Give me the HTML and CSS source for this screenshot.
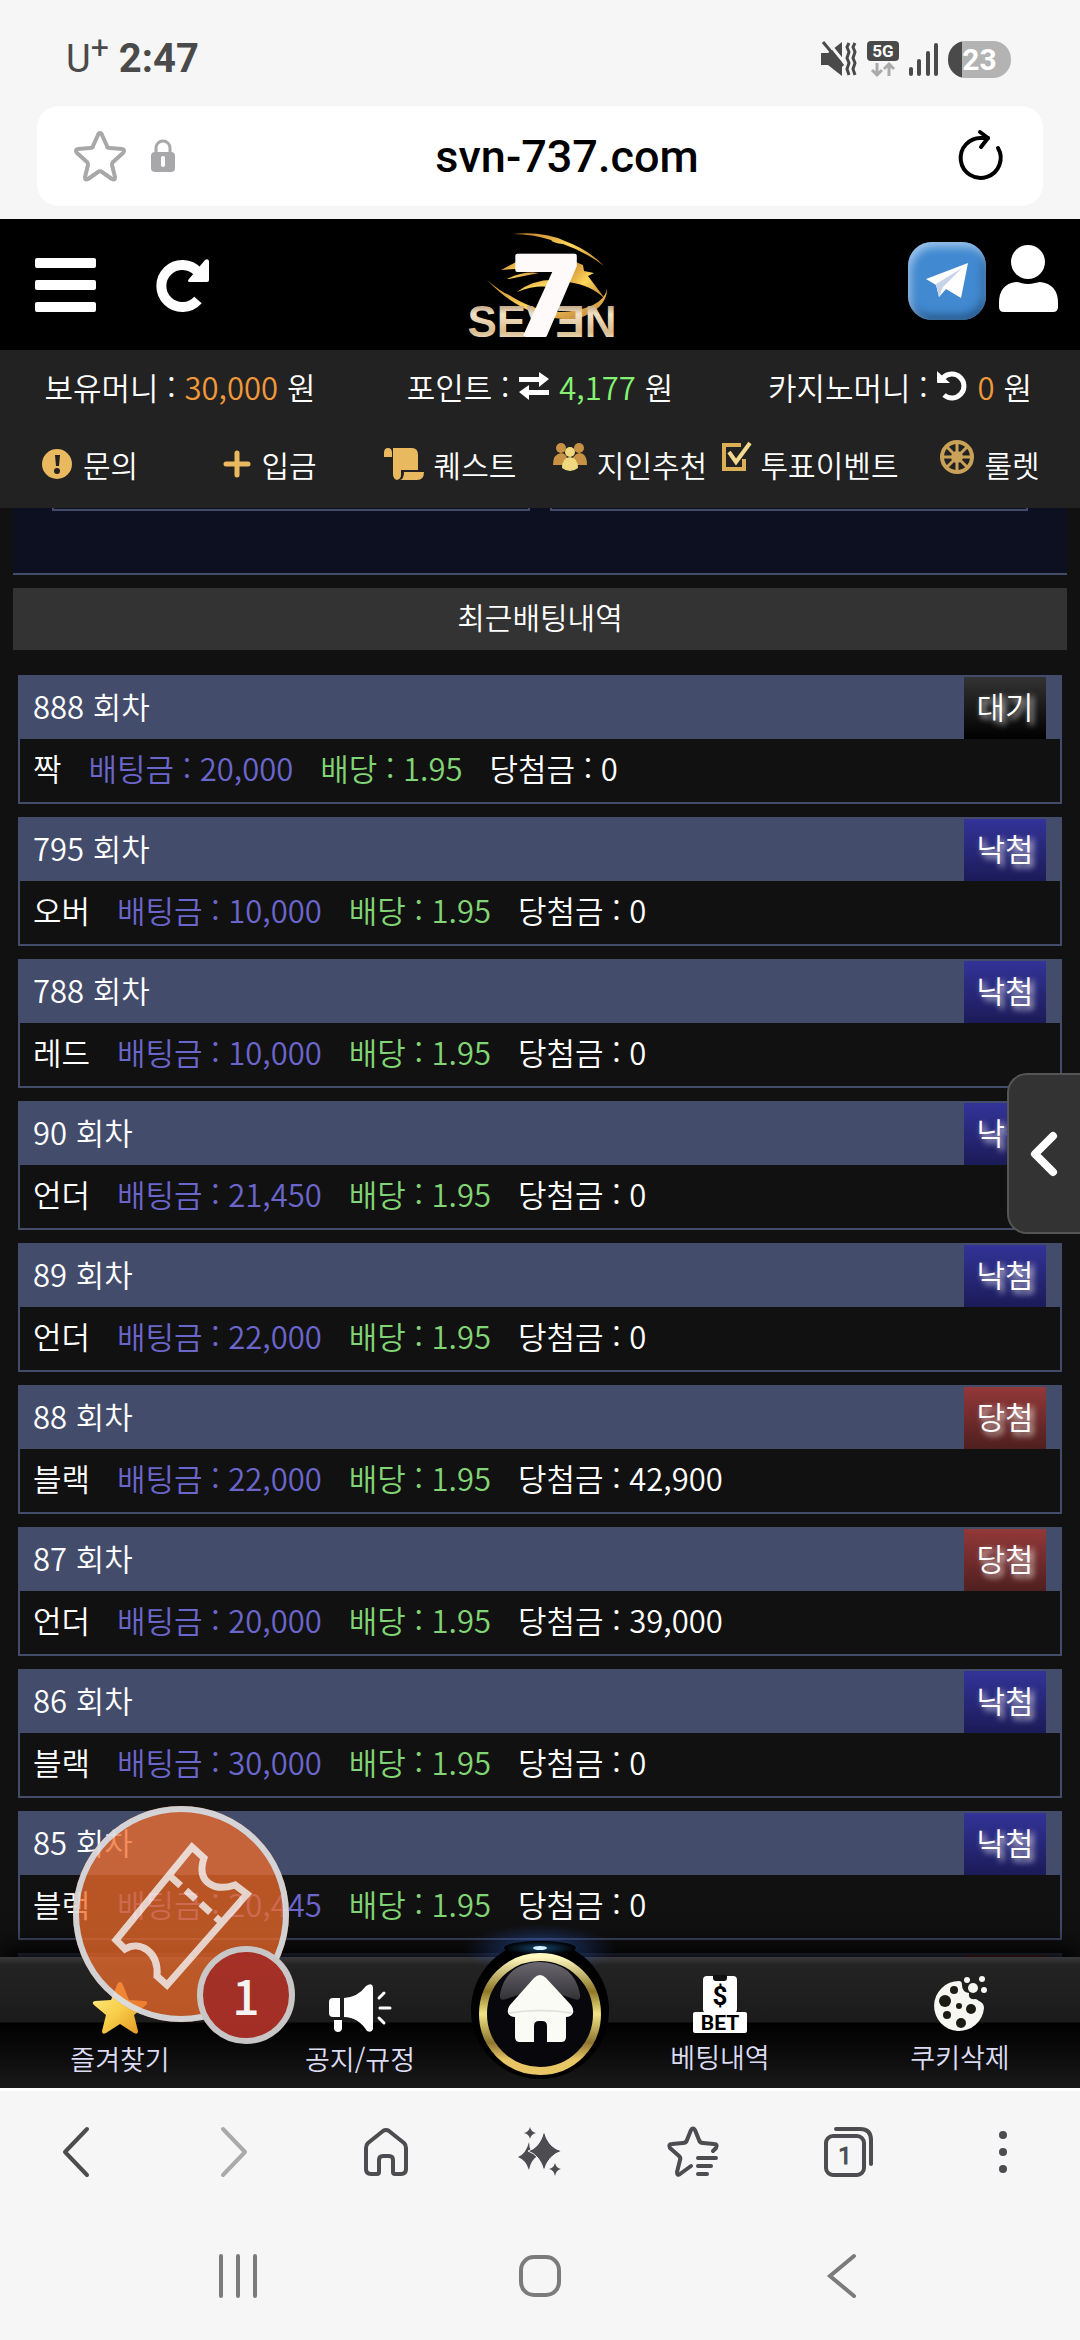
FILE: index.html
```html
<!DOCTYPE html>
<html lang="ko">
<head>
    <meta charset="utf-8">
    <meta name="viewport" content="width=device-width, initial-scale=1">
    <title>SEVEN</title>
    <link rel="stylesheet" href="styles.css">
</head>
<body>
    <div class="status-bar">
        <div class="status-left">
            <span class="carrier">U<sup>+</sup></span>
            <span class="clock">2:47</span>
        </div>
        <div class="status-right">
            <svg width="38" height="36" viewBox="0 0 38 36" fill="#4a4a4a">
                <path d="M1 12h7L22 1v34L8 24H1z"/>
                <path d="M7 0l20 25" stroke="#f6f6f6" stroke-width="3"/>
                <path d="M3 1l20 24" stroke="#4a4a4a" stroke-width="3"/>
                <path d="M29 2l-2 4 2 5-2 6 2 5-2 6 2 6M35 2l-2 4 2 5-2 6 2 5-2 6 2 6" fill="none" stroke="#4a4a4a" stroke-width="3"/>
            </svg>
            <svg width="32" height="36" viewBox="0 0 32 36">
                <rect x="0" y="0" width="32" height="20" rx="4" fill="#4a4a4a"/>
                <text class="svg-5g" x="16" y="16" text-anchor="middle">5G</text>
                <path d="M10 22v12M5 29l5 5 5-5M22 35V23M17 28l5-5 5 5" fill="none" stroke="#aaa" stroke-width="3"/>
            </svg>
            <svg width="31" height="36" viewBox="0 0 31 36" stroke="#4a4a4a" stroke-width="4" stroke-linecap="round">
                <path d="M3 28v5M11 20v13M20 12v21M28 4v29"/>
            </svg>
            <span class="battery">23</span>
        </div>
    </div>

    <form class="address-bar">
        <button type="button" class="icon-btn" aria-label="북마크">
            <svg width="50" height="50" viewBox="0 0 50 50" fill="none" stroke="#a8a8aa" stroke-width="4" stroke-linejoin="round">
                <path d="M25 2c1 0 2 1 2 2l5 11c0 2 1 2 3 2l12 1c2 0 3 2 1 4l-10 9c-1 1-1 2-1 3l3 12c0 3-1 3-3 2l-10-7c-1-1-3-1-4 0l-10 7c-2 1-3 1-3-2l3-12c0-1 0-2-1-3L2 22c-2-2-1-4 1-4l12-1c2 0 3 0 3-2l5-11c0-1 1-2 2-2z"/>
            </svg>
        </button>
        <svg class="lock" width="24" height="34" viewBox="0 0 24 34">
            <path d="M5 15V9a7 7 0 0114 0v6" fill="none" stroke="#a8a8aa" stroke-width="3"/>
            <rect x="0" y="13" width="24" height="20" rx="4" fill="#a8a8aa"/>
            <path d="M12 19v7" stroke="#fff" stroke-width="4" stroke-linecap="round"/>
        </svg>
        <input class="address" type="text" value="svn-737.com" aria-label="주소">
        <button type="button" class="icon-btn" aria-label="새로고침">
            <svg width="46" height="52" viewBox="0 0 46 52" fill="none" stroke="#000" stroke-width="4" stroke-linecap="round" stroke-linejoin="round">
                <path d="M39 18A20 20 0 1 1 23 8h6"/>
                <path d="M21 2l8 6-7 9"/>
            </svg>
        </button>
    </form>

    <div class="page">
        <header class="site-header">
            <div class="header-side">
                <button class="icon-btn" aria-label="메뉴">
                    <svg width="61" height="54" viewBox="0 0 61 54" fill="#fff">
                        <rect width="61" height="10" rx="2"/>
                        <rect y="22" width="61" height="10" rx="2"/>
                        <rect y="44" width="61" height="10" rx="2"/>
                    </svg>
                </button>
                <button class="icon-btn" aria-label="새로고침">
                    <svg width="54" height="54" viewBox="0 0 54 54">
                        <path d="M41 42A21 21 0 1 1 41 14" fill="none" stroke="#fff" stroke-width="10"/>
                        <path d="M52 3v19q0 2-2 2H32q-2-1 0-3L48 2q3-2 4 1z" fill="#fff"/>
                    </svg>
                </button>
            </div>
            <a href="#" class="logo" aria-label="SEVEN">
                <svg width="148" height="110" viewBox="0 0 148 110">
                    <defs>
                        <linearGradient id="gold" x1="0" x2="1" y1="0" y2="1">
                            <stop offset="0" stop-color="#c07a2c"/>
                            <stop offset=".5" stop-color="#ffd65a"/>
                            <stop offset="1" stop-color="#b87a35"/>
                        </linearGradient>
                        <linearGradient id="cream" x1="0" x2="0" y1="0" y2="1">
                            <stop offset="0" stop-color="#8f6a42"/>
                            <stop offset=".35" stop-color="#f3e2c6"/>
                            <stop offset=".7" stop-color="#d9bb8e"/>
                            <stop offset="1" stop-color="#fff6e4"/>
                        </linearGradient>
                    </defs>
                    <g fill="url(#gold)">
                        <path d="M40 4q30-3 52 7 24 9 39 25-18-14-41-22-10-1-12-4-18-6-38-6z"/>
                        <path d="M28 40l15-8v-2l20 2v9l-22-2zM34 49q16-8 32-6l-30 6z"/>
                        <path d="M44 62q18-14 42-12l-10 7q-14-2-32 5z"/>
                        <path d="M98 30l12 5 1 6 10 2-6 3 18 24q-14-15-38-18z"/>
                        <path d="M14 50q14 12 22 15 44 28 84 10 12-6 14-16 0 20-30 30-50 3-90-39z"/>
                    </g>
                    <text class="logo-word" x="69" y="107" text-anchor="middle" fill="url(#cream)">SEVƎN</text>
                    <text class="logo-seven" x="74" y="105" text-anchor="middle">7</text>
                </svg>
            </a>
            <div class="header-side header-right">
                <a href="#" class="telegram" aria-label="텔레그램">
                    <svg width="44" height="38" viewBox="0 0 44 38">
                        <path d="M1 17L43 1l-7 35-15-9-7 8-3-12z" fill="#fff"/>
                        <path d="M11 22L37 6 18 25l-4 10z" fill="#c5d4e8"/>
                    </svg>
                </a>
                <a href="#" class="user" aria-label="내 정보">
                    <svg width="59" height="67" viewBox="0 0 59 67" fill="#fff">
                        <circle cx="29" cy="17" r="17"/>
                        <path d="M17 37q3 0 5 1 7 2 14 0l5-1q18 2 18 21v4q0 5-5 5H5q-5 0-5-5v-4q0-19 17-21z"/>
                    </svg>
                </a>
            </div>
        </header>

        <section class="info-bar">
            <div class="money">
                <div class="money-item">보유머니 : <span class="orange">30,000</span> 원</div>
                <div class="money-item">포인트 :
                    <svg width="32" height="28" viewBox="0 0 32 28" fill="#fff">
                        <path d="M1 5h20V0l10 7-10 8V10H1zM31 18H11v-5L1 20l10 8v-5h20z"/>
                    </svg>
                    <span class="green">4,177</span> 원</div>
                <div class="money-item">카지노머니 :
                    <svg width="32" height="32" viewBox="0 0 32 32">
                        <path d="M6 8a12 12 0 1 1 1 17" fill="none" stroke="#fff" stroke-width="5"/>
                        <path d="M0 1l13 12H1q-1 0-1-1z" fill="#fff"/>
                    </svg>
                    <span class="orange">0</span> 원</div>
            </div>
            <nav class="quick-menu">
                <a href="#">
                    <svg width="31" height="31" viewBox="0 0 31 31">
                        <circle cx="15" cy="15" r="15" fill="#e9b95f"/>
                        <path d="M13 6h5l-1 11h-3z" fill="#222"/>
                        <circle cx="15" cy="22" r="3" fill="#222"/>
                    </svg>문의</a>
                <a href="#">
                    <svg width="28" height="28" viewBox="0 0 28 28" stroke="#e9b95f" stroke-width="5" stroke-linecap="round">
                        <path d="M14 3v22M3 14h22"/>
                    </svg>입금</a>
                <a href="#">
                    <svg width="40" height="32" viewBox="0 0 40 32" fill="#e9b95f">
                        <path d="M9 0h19q6 0 6 7v15H17v5q0 4-4 5-4-1-4-6zM0 5q0-5 4-5t4 5v4H0zM20 24h20q0 8-7 8H16q4-1 4-8z"/>
                    </svg>퀘스트</a>
                <a href="#">
                    <svg class="raised" width="34" height="30" viewBox="0 0 34 30">
                        <g fill="#c79243">
                            <circle cx="8" cy="6" r="5"/><circle cx="26" cy="6" r="5"/>
                            <path d="M0 23q0-11 8-12 7 0 7 12zM19 23q0-11 7-12 8 0 8 12z"/>
                        </g>
                        <g fill="#f0d880">
                            <circle cx="17" cy="10" r="5"/><path d="M9 26q0-10 8-11 8 1 8 11-8 6-16 0z"/>
                        </g>
                    </svg>지인추천</a>
                <a href="#">
                    <svg class="raised" width="29" height="30" viewBox="0 0 29 30" fill="none">
                        <path d="M19 3H2v24h20V17" stroke="#dcae55" stroke-width="4"/>
                        <path d="M7 10l7 10L28 1" stroke="#f3d98d" stroke-width="4"/>
                    </svg>투표이벤트</a>
                <a href="#">
                    <svg class="raised" width="34" height="34" viewBox="0 0 34 34" fill="none" stroke="#c9a258">
                        <circle cx="17" cy="17" r="15" stroke-width="4"/>
                        <circle cx="17" cy="17" r="5" fill="#e8cf87" stroke-width="2"/>
                        <path d="M17 2v30M2 17h30M6 6l22 22M28 6L6 28" stroke-width="3"/>
                    </svg>룰렛</a>
            </nav>
        </section>

        <main class="content">
            <div class="game-panel">
                <div class="game-box"></div>
                <div class="game-box"></div>
            </div>
            <h2 class="section-title">최근배팅내역</h2>
            <ul class="bet-list">
                <li class="bet">
                    <div class="bet-head"><span>888 회차</span><span class="badge wait">대기</span></div>
                    <div class="bet-body"><span>짝</span><span class="amount">배팅금 : 20,000</span><span class="odds">배당 : 1.95</span><span>당첨금 : 0</span></div>
                </li>
                <li class="bet">
                    <div class="bet-head"><span>795 회차</span><span class="badge lose">낙첨</span></div>
                    <div class="bet-body"><span>오버</span><span class="amount">배팅금 : 10,000</span><span class="odds">배당 : 1.95</span><span>당첨금 : 0</span></div>
                </li>
                <li class="bet">
                    <div class="bet-head"><span>788 회차</span><span class="badge lose">낙첨</span></div>
                    <div class="bet-body"><span>레드</span><span class="amount">배팅금 : 10,000</span><span class="odds">배당 : 1.95</span><span>당첨금 : 0</span></div>
                </li>
                <li class="bet">
                    <div class="bet-head"><span>90 회차</span><span class="badge lose">낙첨</span></div>
                    <div class="bet-body"><span>언더</span><span class="amount">배팅금 : 21,450</span><span class="odds">배당 : 1.95</span><span>당첨금 : 0</span></div>
                </li>
                <li class="bet">
                    <div class="bet-head"><span>89 회차</span><span class="badge lose">낙첨</span></div>
                    <div class="bet-body"><span>언더</span><span class="amount">배팅금 : 22,000</span><span class="odds">배당 : 1.95</span><span>당첨금 : 0</span></div>
                </li>
                <li class="bet">
                    <div class="bet-head"><span>88 회차</span><span class="badge win">당첨</span></div>
                    <div class="bet-body"><span>블랙</span><span class="amount">배팅금 : 22,000</span><span class="odds">배당 : 1.95</span><span>당첨금 : 42,900</span></div>
                </li>
                <li class="bet">
                    <div class="bet-head"><span>87 회차</span><span class="badge win">당첨</span></div>
                    <div class="bet-body"><span>언더</span><span class="amount">배팅금 : 20,000</span><span class="odds">배당 : 1.95</span><span>당첨금 : 39,000</span></div>
                </li>
                <li class="bet">
                    <div class="bet-head"><span>86 회차</span><span class="badge lose">낙첨</span></div>
                    <div class="bet-body"><span>블랙</span><span class="amount">배팅금 : 30,000</span><span class="odds">배당 : 1.95</span><span>당첨금 : 0</span></div>
                </li>
                <li class="bet">
                    <div class="bet-head"><span>85 회차</span><span class="badge lose">낙첨</span></div>
                    <div class="bet-body"><span>블랙</span><span class="amount">배팅금 : 20,445</span><span class="odds">배당 : 1.95</span><span>당첨금 : 0</span></div>
                </li>
                <li class="bet">
                    <div class="bet-head"><span></span><span class="badge win"></span></div>
                </li>
            </ul>
        </main>

        <nav class="bottom-nav">
            <a href="#" class="low">
                <svg width="56" height="54" viewBox="0 0 56 54">
                    <defs>
                        <linearGradient id="star" x1="0" x2="1" y1="0" y2="1">
                            <stop offset="0" stop-color="#fff08a"/>
                            <stop offset=".5" stop-color="#f8cf4a"/>
                            <stop offset="1" stop-color="#e08f20"/>
                        </linearGradient>
                    </defs>
                    <path d="M28 1q2 0 3 3l6 15 16 1q4 1 1 4L42 34l4 16q0 4-4 2l-14-9-14 9q-4 2-4-2l4-16L2 24q-3-3 1-4l16-1 6-15q1-3 3-3z" fill="url(#star)"/>
                </svg>
                즐겨찾기
            </a>
            <a href="#" class="low">
                <svg width="62" height="54" viewBox="0 0 62 54" fill="#fff">
                    <path d="M4 17h7v19H4q-4 0-4-4V21q0-4 4-4zM5 39h8v9q-1 3-4 3t-4-3zM15 17q14-1 22-12 6-4 7 1v42q-1 4-6 2-9-14-23-14z"/>
                    <path d="M50 17l5-5M51 27h10M50 37l5 5" stroke="#fff" stroke-width="3" stroke-linecap="round"/>
                </svg>
                공지/규정
            </a>
            <a href="#" class="home" aria-label="홈">
                <svg class="home-btn" width="220" height="164" viewBox="0 0 220 164">
                    <defs>
                        <radialGradient id="glow">
                            <stop offset="0" stop-color="#2d6ad8" stop-opacity=".6"/>
                            <stop offset="1" stop-color="#2d4aa8" stop-opacity="0"/>
                        </radialGradient>
                        <radialGradient id="spark">
                            <stop offset="0" stop-color="#17466e"/>
                            <stop offset="1" stop-color="#000"/>
                        </radialGradient>
                        <linearGradient id="ring" x1="0" x2="0" y1="0" y2="1">
                            <stop offset="0" stop-color="#fff9c0"/>
                            <stop offset=".3" stop-color="#8d7626"/>
                            <stop offset=".5" stop-color="#f3e583"/>
                            <stop offset=".75" stop-color="#8d7430"/>
                            <stop offset=".9" stop-color="#e8c565"/>
                        </linearGradient>
                        <linearGradient id="gloss" x1="0" x2="0" y1="0" y2="1">
                            <stop offset="0" stop-color="#6a686e"/>
                            <stop offset="1" stop-color="#333237"/>
                        </linearGradient>
                    </defs>
                    <ellipse cx="110" cy="30" rx="76" ry="26" fill="url(#glow)"/>
                    <circle cx="110" cy="90" r="69" fill="#000"/>
                    <ellipse cx="110" cy="28" rx="36" ry="7" fill="url(#spark)"/>
                    <ellipse cx="110" cy="28" rx="7" ry="2" fill="#d8f2ff"/>
                    <circle cx="110" cy="94" r="57" fill="#08080c" stroke="url(#ring)" stroke-width="8"/>
                    <path d="M70 74Q76 43 110 42q34 1 40 32 1 8-6 5L110 68 76 79q-7 3-6-5z" fill="url(#gloss)"/>
                    <path d="M110 55q3 0 6 3l25 27q3 4 2 8-2 4-7 4v20q0 5-5 5h-14v-16q0-5-5-5h-3q-5 0-5 5v16H90q-5 0-5-5V97q-5 0-7-4-1-4 2-8l24-27q3-3 6-3z" fill="#fbfbf5"/>
                    <path d="M79 93q31-5 63 0" fill="none" stroke="#e2e3db" stroke-width="2"/>
                </svg>
            </a>
            <a href="#">
                <svg width="54" height="58" viewBox="0 0 54 58">
                    <rect x="10" y="1" width="34" height="37" rx="4" fill="#fff"/>
                    <path d="M20 0h14v3q0 3-3 3h-8q-3 0-3-3z" fill="#111"/>
                    <text class="svg-dollar" x="27" y="30" text-anchor="middle">$</text>
                    <rect y="37" width="54" height="21" rx="2" fill="#fff"/>
                    <text class="svg-bet" x="27" y="55" text-anchor="middle">BET</text>
                </svg>
                베팅내역
            </a>
            <a href="#">
                <svg width="54" height="58" viewBox="0 0 54 58" fill="#f6f6f3">
                    <path d="M26 6q3 0 3 4 0 7 7 8-1 7 6 6 2 0 4 2 5 2 5 7a25 25 0 11-25-27z"/>
                    <g fill="#1c1c14">
                        <circle cx="21" cy="15" r="4"/><circle cx="12" cy="26" r="6"/><circle cx="26" cy="31" r="3"/>
                        <circle cx="38" cy="34" r="5"/><circle cx="14" cy="40" r="4"/><circle cx="28" cy="48" r="5"/>
                    </g>
                    <circle cx="40" cy="13" r="5"/><circle cx="34" cy="5" r="3"/><circle cx="49" cy="4" r="3"/><circle cx="51" cy="15" r="3"/>
                </svg>
                쿠키삭제
            </a>
        </nav>

        <button class="side-handle" aria-label="열기">
            <svg width="30" height="46" viewBox="0 0 30 46" fill="none" stroke="#fff" stroke-width="8" stroke-linecap="round" stroke-linejoin="round">
                <path d="M24 5L6 23l18 18"/>
            </svg>
        </button>

        <button class="coupon" aria-label="쿠폰 1">
            <svg width="216" height="216" viewBox="0 0 216 216" fill="none" stroke="#fff" stroke-width="7">
                <path d="M119 41l12 11c-8 24 10 34 31 27l12 9-80 91-10-9c2-24-17-36-32-27l-9-9z"/>
                <path d="M98 71l49 44" stroke-dasharray="13 7"/>
            </svg>
            <span class="count">1</span>
        </button>
    </div>

    <nav class="toolbar">
        <button class="icon-btn" aria-label="뒤로">
            <svg width="48" height="50" viewBox="0 0 48 50"><path d="M34 2L12 25l22 23"/></svg>
        </button>
        <button class="icon-btn faded" aria-label="앞으로">
            <svg width="48" height="50" viewBox="0 0 48 50"><path d="M16 2l22 23-22 23"/></svg>
        </button>
        <button class="icon-btn" aria-label="홈">
            <svg width="48" height="50" viewBox="0 0 48 50"><path d="M4 21q0-3 2-5L21 4q3-2 6 0l15 12q2 2 2 5v21q0 5-5 5h-6q-2 0-2-2V33q0-4-4-4h-6q-4 0-4 4v12q0 2-2 2H9q-5 0-5-5z"/></svg>
        </button>
        <button class="icon-btn" aria-label="AI">
            <svg width="48" height="50" viewBox="0 0 48 50">
                <g class="solid">
                    <path d="M14 0q1 5 6 6-5 1-6 6-1-5-6-6 5-1 6-6zM39 36q1 5 6 6-5 1-6 7-1-6-6-7 5-1 6-6zM13 15q0 12 9 14-7 3-9 14-3-10-11-13 8-3 11-15z"/>
                    <path class="front" d="M28 4q4 17 18 20-14 4-18 20-4-16-16-20 12-3 16-20z"/>
                </g>
            </svg>
        </button>
        <button class="icon-btn" aria-label="북마크 목록">
            <svg width="52" height="50" viewBox="0 0 52 50"><path d="M45 24l3-3q2-4-2-4l-11-1q-3 0-4-3L27 3q-2-3-4 0l-4 10q-1 3-4 3L4 17q-4 0-2 4l9 8q2 2 1 4L9 45q0 4 3 2l11-8M30 31h18M30 39h13M30 47h9"/></svg>
        </button>
        <button class="icon-btn" aria-label="탭 1개">
            <svg width="50" height="50" viewBox="0 0 50 50">
                <rect x="2" y="9" width="38" height="39" rx="7"/>
                <path d="M12 2h24q11 0 11 11v24"/>
                <text class="svg-tab" x="21" y="37" text-anchor="middle">1</text>
            </svg>
        </button>
        <button class="icon-btn" aria-label="더보기">
            <svg width="48" height="50" viewBox="0 0 48 50"><g class="solid"><circle cx="24" cy="8" r="4"/><circle cx="24" cy="25" r="4"/><circle cx="24" cy="42" r="4"/></g></svg>
        </button>
    </nav>

    <nav class="system-nav">
        <button class="icon-btn" aria-label="최근 앱">
            <svg width="44" height="44" viewBox="0 0 44 44"><path d="M5 2v40M22 2v40M39 2v40"/></svg>
        </button>
        <button class="icon-btn" aria-label="홈 화면">
            <svg width="44" height="44" viewBox="0 0 44 44"><rect x="3" y="3" width="38" height="38" rx="13"/></svg>
        </button>
        <button class="icon-btn" aria-label="이전">
            <svg width="44" height="44" viewBox="0 0 44 44"><path d="M34 2L10 22l24 20"/></svg>
        </button>
    </nav>
</body>
</html>
```
FILE: styles.css
```css
* {
    box-sizing: border-box;
}
body {
    margin: 0;
    height: 100vh;
    display: flex;
    flex-direction: column;
    overflow: hidden;
    background: #f6f6f6;
    color: #fff;
    font-family: "Noto Sans CJK KR", sans-serif;
    font-weight: 350;
    font-size: 30px;
}
a {
    color: inherit;
    text-decoration: none;
}
svg {
    display: block;
    flex: none;
    overflow: visible;
}
.icon-btn {
    border: 0;
    padding: 0;
    background: none;
}

/* phone status bar */
.status-bar {
    display: flex;
    justify-content: space-between;
    align-items: center;
    padding: 36px 69px 24px 66px;
    font-family: Roboto, sans-serif;
    color: #4a4a4a;
}
.status-left {
    display: flex;
    align-items: center;
    gap: 10px;
    line-height: 46px;
}
.carrier {
    font-size: 38px;
    font-weight: 400;
}
.carrier sup {
    font-size: 32px;
    line-height: 0;
}
.clock {
    font-size: 40px;
    font-weight: 700;
}
.status-right {
    display: flex;
    align-items: center;
    gap: 9px;
}
.battery {
    width: 63px;
    border-radius: 18px;
    background: linear-gradient(90deg, #4a4a4a 23%, #b3b3b3 23%);
    color: #fff;
    font-size: 30px;
    font-weight: 700;
    line-height: 37px;
    text-align: center;
}
.svg-5g {
    font: 700 17px Roboto, sans-serif;
    fill: #fff;
}

/* browser address bar */
.address-bar {
    display: flex;
    align-items: center;
    margin: 0 37px 13px;
    padding: 0 38px;
    height: 100px;
    border-radius: 22px;
    background: #fff;
}
.lock {
    margin-left: 26px;
}
.address {
    flex: 1;
    min-width: 0;
    border: 0;
    background: none;
    color: #000;
    font-family: Roboto, sans-serif;
    font-size: 45px;
    font-weight: 500;
    text-align: center;
}

/* site */
.page {
    position: relative;
    flex: 1;
    min-height: 0;
    display: flex;
    flex-direction: column;
    overflow: hidden;
    background: #111;
}
.site-header {
    display: grid;
    grid-template-columns: 1fr auto 1fr;
    align-items: center;
    height: 131px;
    padding: 0 22px 0 35px;
    background: #000;
}
.header-side {
    display: flex;
    align-items: center;
    gap: 61px;
}
.header-right {
    justify-content: flex-end;
    gap: 13px;
    padding-bottom: 7px;
}
.telegram {
    display: flex;
    align-items: center;
    justify-content: center;
    width: 78px;
    height: 78px;
    border-radius: 24px;
    background: #4189d0;
    box-shadow: inset 3px 5px 8px #9cc4ea, inset -2px -5px 8px #265788;
}
.user {
    padding-bottom: 6px;
}
.logo-word {
    font: 700 44px "Liberation Sans", sans-serif;
}
.logo-seven {
    font: 900 112px Roboto, sans-serif;
    fill: #fffafa;
    stroke: #fffafa;
    stroke-width: 4px;
    stroke-linejoin: round;
}

.info-bar {
    height: 158px;
    padding-top: 10px;
    background: #222;
}
.money {
    display: grid;
    grid-template-columns: repeat(3, 1fr);
    height: 52px;
    font-size: 31px;
}
.money-item {
    display: flex;
    align-items: center;
    justify-content: center;
    gap: 9px;
    white-space: nowrap;
}
.orange {
    color: #f0983a;
}
.green {
    color: #86f274;
}
.quick-menu {
    display: grid;
    grid-template-columns: repeat(6, 1fr);
    margin-top: 26px;
    height: 52px;
}
.quick-menu a {
    display: flex;
    align-items: center;
    justify-content: center;
    gap: 10px;
    white-space: nowrap;
}
.raised {
    margin-bottom: 14px;
}

.content {
    flex: 1;
    min-height: 0;
    overflow: hidden;
    padding: 0 13px;
}
.game-panel {
    display: grid;
    grid-template-columns: 1fr 1fr;
    gap: 20px;
    height: 67px;
    padding: 0 39px;
    background: #0d1020;
    border-bottom: 2px solid #434c6b;
}
.game-box {
    height: 3px;
    border: 2px solid #434c6b;
    border-top: 0;
}
.section-title {
    margin: 13px 0 25px;
    padding-bottom: 6px;
    background: #333;
    font-size: 30px;
    font-weight: 350;
    line-height: 56px;
    text-align: center;
}
.bet-list {
    list-style: none;
    margin: 0;
    padding: 0 5px;
    display: grid;
    gap: 13px;
}
.bet {
    border: 2px solid #434c6b;
    font-size: 31px;
}
.bet-head {
    display: flex;
    justify-content: space-between;
    padding: 0 14px 0 13px;
    height: 62px;
    line-height: 58px;
    background: #434c6b;
}
.badge {
    width: 82px;
    height: 62px;
    text-align: center;
    text-shadow: 3px 3px 6px #fff;
}
.wait {
    background: linear-gradient(#333, #000);
}
.lose {
    background: linear-gradient(#333399, #1b1b58);
}
.win {
    background: linear-gradient(#933838, #4f1f1f);
}
.bet-body {
    display: flex;
    gap: 27px;
    padding: 0 13px;
    height: 63px;
    line-height: 58px;
    white-space: nowrap;
}
.amount {
    color: #6a66cc;
}
.odds {
    color: #82d574;
}

.bottom-nav {
    position: relative;
    display: grid;
    grid-template-columns: 2fr 2fr 1fr 2fr 2fr;
    height: 131px;
    background: linear-gradient(#3a3a3c 0, #232323 8px, #1b1b1b 65px, #000 66px, #191919 100%);
    box-shadow: 0 -10px 24px #000;
    color: #dcdcf4;
    font-size: 27px;
}
.bottom-nav a {
    display: flex;
    flex-direction: column;
    align-items: center;
    padding-top: 18px;
    line-height: 48px;
    white-space: nowrap;
}
.bottom-nav .low {
    padding-top: 24px;
}
.bottom-nav .home {
    position: relative;
    padding: 0;
}
.home-btn {
    position: absolute;
    left: 50%;
    bottom: 4px;
    margin-left: -110px;
}
.svg-dollar {
    font: 700 26px Roboto, sans-serif;
}
.svg-bet {
    font: 700 21px Roboto, sans-serif;
}

/* floating controls */
.side-handle {
    position: absolute;
    right: 0;
    top: 854px;
    display: flex;
    align-items: center;
    width: 73px;
    height: 161px;
    padding: 0 0 0 20px;
    border: 2px solid #555;
    border-right: 0;
    border-radius: 20px 0 0 20px;
    background: #333;
}
.coupon {
    position: absolute;
    left: 73px;
    bottom: 66px;
    width: 216px;
    height: 216px;
    padding: 0;
    border: 0;
    border-radius: 50%;
    background: rgba(239, 108, 44, 0.8);
    box-shadow: inset 0 0 0 6px #dcdcde;
    opacity: 0.95;
}
.coupon svg {
    opacity: 0.8;
}
.count {
    position: absolute;
    right: -6px;
    bottom: -22px;
    width: 98px;
    height: 98px;
    border: 6px solid #d2d0d0;
    border-radius: 50%;
    background: #ab3127;
    color: #fff;
    font: 500 48px/84px "Noto Sans CJK KR", sans-serif;
}

/* browser toolbar and system buttons */
.toolbar {
    display: grid;
    grid-template-columns: repeat(7, 1fr);
    align-items: center;
    height: 124px;
    border-top: 3px solid #fff;
}
.toolbar button,
.system-nav button {
    display: flex;
    justify-content: center;
}
.toolbar svg {
    fill: none;
    stroke: #4c4c51;
    stroke-width: 4px;
    stroke-linecap: round;
    stroke-linejoin: round;
}
.toolbar .faded svg {
    stroke: #aaa;
}
.toolbar .solid {
    fill: #4c4c51;
    stroke: none;
}
.toolbar .front {
    stroke: #f6f6f6;
    stroke-width: 1px;
}
.svg-tab {
    font: 400 24px Roboto, sans-serif;
    fill: #4c4c51;
    stroke: #4c4c51;
    stroke-width: 1px;
}
.system-nav {
    display: grid;
    grid-template-columns: repeat(3, 1fr);
    align-items: center;
    height: 128px;
    padding: 0 87px;
}
.system-nav svg {
    fill: none;
    stroke: #7b7b7b;
    stroke-width: 4px;
    stroke-linecap: round;
}
```
